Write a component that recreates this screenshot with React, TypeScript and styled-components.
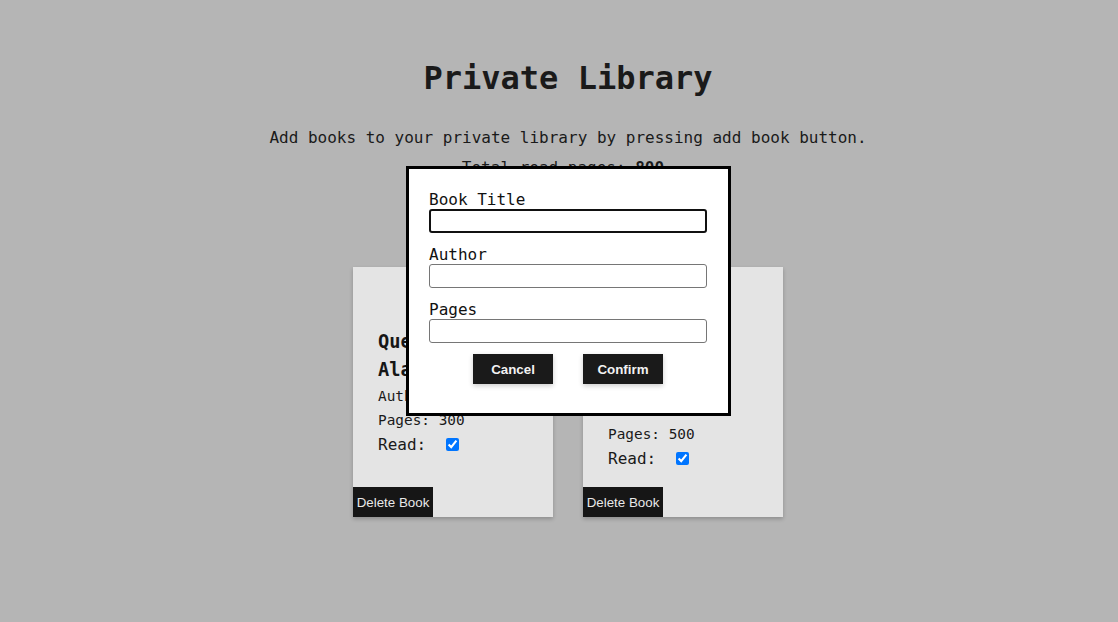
import React from "react";
import styled, { createGlobalStyle } from "styled-components";

const GlobalStyle = createGlobalStyle`
  html, body {
    margin: 0;
    padding: 0;
    background: #b5b5b5;
    color: #1a1a1a;
    font-family: "DejaVu Sans Mono", "Liberation Mono", monospace;
  }
  * { box-sizing: border-box; }
`;

const Page = styled.main`
  min-height: 622px;
  padding: 60px 0 0 18px;
  display: flex;
  flex-direction: column;
  align-items: center;
`;

const Title = styled.h1`
  margin: 0;
  font-size: 32px;
  line-height: 36px;
  font-weight: 700;
  color: #1a1a1a;
`;

const Intro = styled.p`
  margin: 33px 0 0;
  font-size: 16px;
  line-height: 18px;
`;

const Total = styled.p`
  margin: 12px 0 0;
  padding-right: 10px;
  font-size: 16px;
  line-height: 18px;
`;

const AddButton = styled.button`
  margin-top: 30px;
  width: 80px;
  height: 30px;
  border: none;
  background: #1a1a1a;
  color: #f0f0f0;
  font-family: "Liberation Sans", Arial, sans-serif;
  font-size: 13.333px;
  font-weight: 700;
`;

const CardRow = styled.section`
  margin-top: 30px;
  display: flex;
  gap: 30px;
  justify-content: center;
`;

const Card = styled.article`
  width: 200px;
  height: 250px;
  background: #e4e4e4;
  box-shadow: 0 2px 4px rgba(0, 0, 0, 0.22);
  display: grid;
  grid-template-areas: "stack";
`;

const CardBody = styled.div`
  grid-area: stack;
  align-self: center;
  padding: 0 25px;
`;

const BookTitle = styled.h3`
  margin: 0;
  font-size: 18.72px;
  line-height: 28px;
  font-weight: 700;
  color: #161616;
`;

const Info = styled.p`
  margin: 0;
  font-size: 14.4px;
  line-height: 24px;
`;

const ReadRow = styled.label`
  display: flex;
  align-items: center;
  height: 25px;
  font-size: 16px;
  line-height: 25px;
`;

const ReadText = styled.span`
  margin-right: 16px;
`;

const Check = styled.input`
  width: 13px;
  height: 13px;
  margin: 3px 3px 3px 4px;
`;

const DeleteButton = styled.button`
  grid-area: stack;
  align-self: end;
  justify-self: start;
  width: 80px;
  height: 30px;
  padding: 0;
  border: none;
  background: #161616;
  color: #e8e8e8;
  font-family: "Liberation Sans", Arial, sans-serif;
  font-size: 13.333px;
`;

const Overlay = styled.div`
  position: fixed;
  inset: 0;
  padding: 166px 0 0 19px;
  display: flex;
  justify-content: center;
  align-items: flex-start;
`;

const Modal = styled.form`
  width: 325px;
  background: #ffffff;
  border: 3px solid #000000;
  padding: 22px 21px 29px 20px;
  display: flex;
  flex-direction: column;
  gap: 13px;
`;

const Field = styled.div`
  display: flex;
  flex-direction: column;
`;

const Label = styled.label`
  font-size: 16px;
  line-height: 18px;
  color: #111111;
`;

const TextInput = styled.input<{ $active?: boolean }>`
  width: 278px;
  height: 24px;
  margin: 0;
  background: #ffffff;
  border: ${(p) => (p.$active ? "2px solid #111111" : "1px solid #767676")};
  border-radius: 3px;
  outline: none;
  font-family: "DejaVu Sans Mono", monospace;
  font-size: 14px;
`;

const Actions = styled.div`
  margin-top: -2px;
  display: flex;
  justify-content: center;
  gap: 30px;
`;

const ActionButton = styled.button`
  width: 80px;
  height: 30px;
  padding: 0;
  border: none;
  background: #1a1a1a;
  color: #f2f2f2;
  font-family: "Liberation Sans", Arial, sans-serif;
  font-size: 13.333px;
  font-weight: 700;
  box-shadow: 0 2px 5px rgba(0, 0, 0, 0.2);
`;

type Book = { title: string; author: string; pages: number; read: boolean };

const books: Book[] = [
  { title: "Quest for Alaska", author: "J. Green", pages: 300, read: true },
  { title: "Chess Moves Explained Simply", author: "Tal", pages: 500, read: true },
];

export default function App() {
  return (
    <>
      <GlobalStyle />
      <Page>
        <Title>Private Library</Title>
        <Intro>Add books to your private library by pressing add book button.</Intro>
        <Total>
          Total read pages: <b>800</b>
        </Total>
        <AddButton type="button">Add Book</AddButton>
        <CardRow>
          {books.map((b) => (
            <Card key={b.title}>
              <CardBody>
                <BookTitle>{b.title}</BookTitle>
                <Info>Author: {b.author}</Info>
                <Info>Pages: {b.pages}</Info>
                <ReadRow>
                  <ReadText>Read:</ReadText>
                  <Check type="checkbox" defaultChecked={b.read} />
                </ReadRow>
              </CardBody>
              <DeleteButton type="button">Delete Book</DeleteButton>
            </Card>
          ))}
        </CardRow>
      </Page>
      <Overlay>
        <Modal onSubmit={(e) => e.preventDefault()}>
          <Field>
            <Label htmlFor="title">Book Title</Label>
            <TextInput id="title" type="text" $active />
          </Field>
          <Field>
            <Label htmlFor="author">Author</Label>
            <TextInput id="author" type="text" />
          </Field>
          <Field>
            <Label htmlFor="pages">Pages</Label>
            <TextInput id="pages" type="number" />
          </Field>
          <Actions>
            <ActionButton type="button">Cancel</ActionButton>
            <ActionButton type="submit">Confirm</ActionButton>
          </Actions>
        </Modal>
      </Overlay>
    </>
  );
}
